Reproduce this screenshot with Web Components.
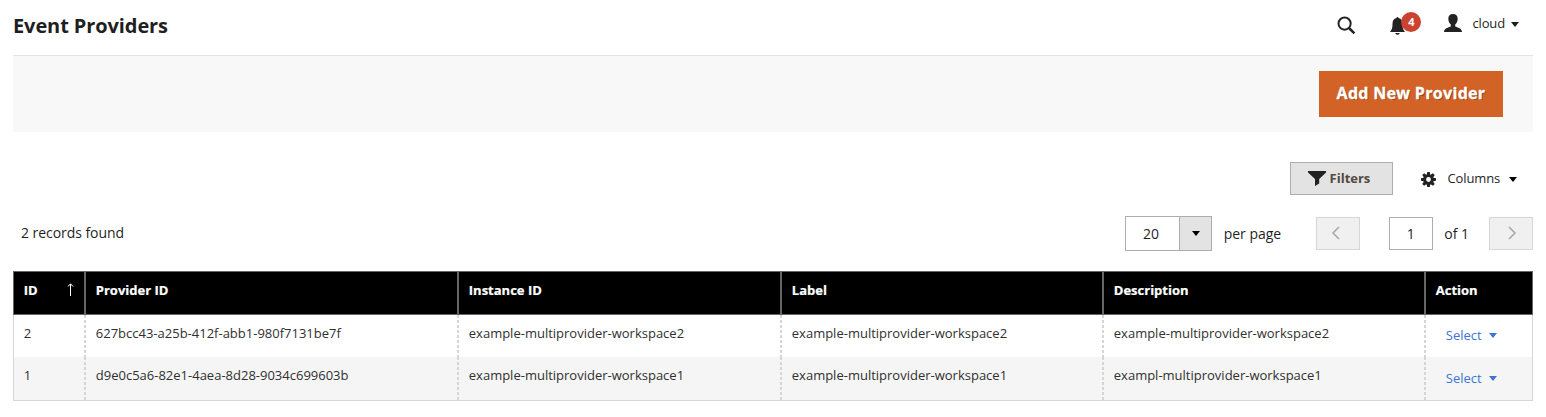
<!DOCTYPE html>
<html lang="en">
<head>
<meta charset="utf-8">
<title>Event Providers</title>
<style>
body{margin:0;background:#fff;font-family:"Open Sans","Noto Sans",sans-serif;color:#1f1f1f}
</style>
</head>
<body>
<providers-page></providers-page>
<script>
const define=(name,css,html)=>{
  customElements.define(name,class extends HTMLElement{
    constructor(){
      super();
      const t=document.createElement('template');
      t.innerHTML=`<style>*,:host{box-sizing:border-box}${css}</style>${html}`;
      this.attachShadow({mode:'open'}).appendChild(t.content.cloneNode(true));
    }
  });
};

define('caret-icon',`:host{display:block;width:8px;height:5px}svg{display:block}`,
`<svg width="8" height="5" viewBox="0 0 8 5"><path d="M0 0h8L4 5z" fill="currentColor"/></svg>`);

define('page-header',`
:host{display:flex;height:56px;border-bottom:1px solid #e3e3e3;align-items:flex-start;justify-content:space-between}
h1{margin:12px 0 0;font-size:20px;line-height:28px;font-weight:700;letter-spacing:-.1px}
nav{display:flex;align-items:flex-start}
.search{margin:16px 34px 0 0;display:block}
.bell{position:relative;width:32px;height:24px;margin:12px 22px 0 0}
.bell svg{position:absolute;left:0;top:5px}
.badge{position:absolute;left:11px;top:0;width:20px;height:20px;border-radius:50%;background:#c9432f;color:#fff;font-size:11px;line-height:20px;font-weight:700;text-align:center}
.user{margin:14px 10px 0 0;display:block}
.name{font-size:13px;line-height:18px;margin:14px 6px 0 0;letter-spacing:-.15px}
caret-icon{margin:22px 14px 0 0}`,
`<h1><slot></slot></h1><nav>
<svg class="search" width="19" height="19" viewBox="0 0 19 19" fill="none" stroke="#222"><circle cx="7.6" cy="7.6" r="6.1" stroke-width="2"/><path d="M12 12l5.4 5.3" stroke-width="2.5"/></svg>
<div class="bell"><svg width="15" height="18" viewBox="0 0 15 18" fill="#222"><path d="M7.5 0c.6 0 1 .5 1 1.100C11.400 1.700 12.500 4 12.500 7c0 4.400 1 6 2.500 8H0c1.500-2 2.500-3.600 2.500-8 0-3 1.100-5.300 4-5.900C6.500.5 6.900 0 7.500 0zM5.300 16h4.400c-.4 1.200-1.200 1.800-2.200 1.800S5.700 17.200 5.300 16z"/></svg><span class="badge">4</span></div>
<svg class="user" width="18" height="18" viewBox="0 0 18 18" fill="#222"><path d="M9 0c3 0 4.700 2 4.700 4.700 0 2.600-1.200 4.700-2.500 5.800v1.700c1 1.300 6.800 1.200 6.800 5.800H0c0-4.600 5.800-4.500 6.800-5.800v-1.700C5.500 9.400 4.300 7.300 4.300 4.700 4.300 2 6 0 9 0z"/></svg>
<span class="name">cloud</span><caret-icon></caret-icon></nav>`);

define('action-bar',`
:host{display:flex;justify-content:flex-end;height:76px;background:#f8f8f8;padding:15px 30px 0 0}
button{width:184px;height:46px;border:0;padding:0 0 2px;background:#d26226;color:#fff;font:700 16px/22px "Open Sans",sans-serif;letter-spacing:.32px;-webkit-text-stroke:.3px #fff;text-shadow:1px 1px 0 rgba(0,0,0,.3)}`,
`<button><slot></slot></button>`);

define('grid-controls',`
:host{display:flex;justify-content:flex-end;align-items:center;height:33px;margin-top:30px;font-size:13px}
button{display:flex;align-items:center;width:103px;height:33px;border:1px solid #adadad;background:#e3e3e3;padding:0 0 1px 17px;font:700 13px/18px "Open Sans",sans-serif;color:#514943}
button svg{margin:1px 4px 0 0}
span{margin-bottom:2px;letter-spacing:-.15px}
.gear{margin:2px 12px 0 28px}
caret-icon{margin:2px 16px 0 9px;color:#000}`,
`<button><svg width="18" height="15" viewBox="0 0 18 15" fill="#222"><path d="M0 0h18v1.500L11.200 8v4.500L7 15V8L0 1.500z"/></svg>Filters</button>
<svg class="gear" width="15" height="15" viewBox="-7.500 -7.500 15 15"><g fill="#222"><path d="M-1.300-7.500h2.600l.6 3.500h-3.800z"/><path d="M-1.300-7.500h2.600l.6 3.500h-3.800z" transform="rotate(45)"/><path d="M-1.300-7.500h2.600l.6 3.500h-3.800z" transform="rotate(90)"/><path d="M-1.300-7.500h2.600l.6 3.500h-3.800z" transform="rotate(135)"/><path d="M-1.300-7.500h2.600l.6 3.500h-3.800z" transform="rotate(180)"/><path d="M-1.300-7.500h2.600l.6 3.500h-3.800z" transform="rotate(225)"/><path d="M-1.300-7.500h2.600l.6 3.500h-3.800z" transform="rotate(270)"/><path d="M-1.300-7.500h2.600l.6 3.500h-3.800z" transform="rotate(315)"/></g><circle r="3.800" fill="none" stroke="#222" stroke-width="2.800"/></svg>
<span>Columns</span><caret-icon></caret-icon>`);

define('grid-pager',`
:host{display:flex;align-items:flex-start;height:35px;margin-top:21px;font-size:14px;line-height:20px}
.found{margin:7px auto 0 8px;letter-spacing:-.05px}
.size{display:flex;width:87px;height:35px;border:1px solid #adadad}
.size span{flex:1;text-align:center;line-height:34px;font-size:14px;padding-right:2px}
.size div{width:32px;border-left:1px solid #adadad;background:#e3e3e3;display:flex;justify-content:center;padding:14px 0 0 1px;color:#000}
.per{margin:8px 35px 0 12px}
.nav{width:44px;height:33px;margin-top:1px;border:1px solid #d6d6d6;background:#f0f0f0;display:flex;align-items:center;padding:0 0 2px 15px}
.nav.next{padding-left:18px}
.page{width:44px;height:33px;margin:1px 11px 0 29px;border:1px solid #adadad;text-align:center;line-height:32px;padding-right:1px}
.of{margin:8px 20px 0 0}`,
`<span class="found">2 records found</span>
<div class="size"><span>20</span><div><caret-icon></caret-icon></div></div><span class="per">per page</span>
<div class="nav"><svg width="8" height="14" viewBox="0 0 8 14" fill="none" stroke="#a5a5a5" stroke-width="1.500"><path d="M7 1L1 7l6 6"/></svg></div>
<div class="page">1</div><span class="of">of 1</span>
<div class="nav next"><svg width="8" height="14" viewBox="0 0 8 14" fill="none" stroke="#a5a5a5" stroke-width="1.500"><path d="M1 1l6 6-6 6"/></svg></div>`);

define('grid-row',`
:host{display:grid;grid-template-columns:72px 373px 323px 322px 322px 106px;height:43px;color:#303030;font-size:13px;line-height:18px;border:solid #d6d6d6;border-width:0 1px}
:host([odd]){height:42px}
:host([even]){background:#f5f5f5;border-bottom-width:1px;height:44px;--shift:1px}
:host([head]){height:44px;background:#000;color:#fff;font-weight:700;-webkit-text-stroke:.2px #fff;border:1px solid #666}
::slotted(*){padding:9px 0 0 9.800px;--line:repeating-linear-gradient(#d6d6d6 0 3px,transparent 3px 5px)}
::slotted(:not(:last-child)){background:var(--line) right/2px 100% no-repeat}
:host([head]) ::slotted(:not(:last-child)){background:linear-gradient(#666,#666) right/2px 100% no-repeat}`,
`<slot></slot>`);

define('sort-label',`:host{display:flex;justify-content:space-between}svg{margin:2px 12px 0 0}`,
`<slot></slot><svg width="7" height="13" viewBox="0 0 7 13" fill="none" stroke="#fff"><path d="M3.500 13V1M1 3.500l2.500-2.700L6 3.500"/></svg>`);

define('row-action',`:host{display:flex;color:#3c74d8}span{margin:calc(2px + var(--shift,0px)) 7px 0 10px}caret-icon{margin-top:calc(9px + var(--shift,0px))}`,
`<span><slot></slot></span><caret-icon></caret-icon>`);

define('providers-page',`:host{display:block;padding:0 13px;width:1546px;height:417px}.table{margin-top:20px}`,
`<page-header>Event Providers</page-header>
<action-bar>Add New Provider</action-bar>
<grid-controls></grid-controls>
<grid-pager></grid-pager>
<div class="table">
<grid-row head><sort-label>ID</sort-label><div>Provider ID</div><div>Instance ID</div><div>Label</div><div>Description</div><div>Action</div></grid-row>
<grid-row odd><div>2</div><div>627bcc43-a25b-412f-abb1-980f7131be7f</div><div>example-multiprovider-workspace2</div><div>example-multiprovider-workspace2</div><div>example-multiprovider-workspace2</div><row-action>Select</row-action></grid-row>
<grid-row even><div>1</div><div>d9e0c5a6-82e1-4aea-8d28-9034c699603b</div><div>example-multiprovider-workspace1</div><div>example-multiprovider-workspace1</div><div>exampl-multiprovider-workspace1</div><row-action>Select</row-action></grid-row>
</div>`);
</script>
</body>
</html>
